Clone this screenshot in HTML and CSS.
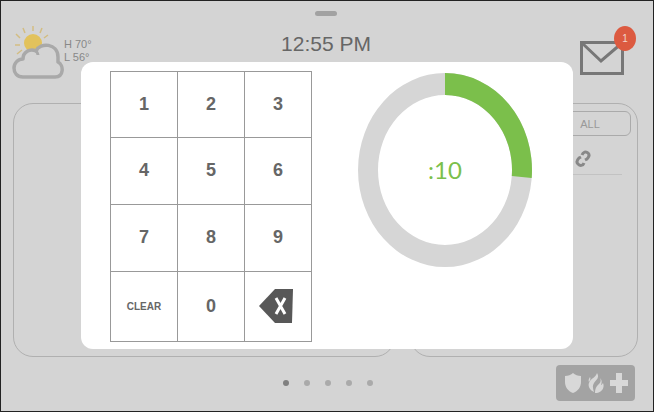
FILE: index.html
```html
<!DOCTYPE html>
<html lang="en">
<head>
  <meta charset="UTF-8">
  <meta name="viewport" content="width=device-width, initial-scale=1.0">
  <title>Security Panel</title>
  <link rel="stylesheet" href="styles.css">
</head>
<body>
  <div class="screen">
    <header class="topbar">
      <div class="weather">
        <svg class="weather-icon" viewBox="0 0 52 54" aria-hidden="true">
          <g stroke="#d3bd82" stroke-width="1.5">
            <path d="M21 6V1M13 8l-2-5M8 13L4 9M8 20H3M28 8l2-5M32 13l4-3M10 25l-5 4"/>
          </g>
          <circle cx="21" cy="18" r="9" fill="#e2c25c"/>
          <path d="M11 52C5 52 2 48 2 43s4-9 9-9c0-7 7-11 13-8 4-9 22-8 22 6v5c6 3 6 15-3 15z" fill="#d4d4d4" stroke="#a9a9a9" stroke-width="3.500" stroke-linejoin="round"/>
          <path d="M24 26c1 1 2 2 2 4" fill="none" stroke="#a9a9a9" stroke-width="3"/>
        </svg>
        <div class="temps">
          <div>H 70°</div>
          <div>L 56°</div>
        </div>
      </div>
      <div class="clock">
        <span class="handle"></span>
        <time>12:55 PM</time>
      </div>
      <div class="mail">
        <button class="mail-button" aria-label="Messages">
          <svg width="44" height="34" viewBox="0 0 44 34" fill="none" stroke="#777" stroke-width="3" aria-hidden="true">
            <path d="M1.500 1.500h41v31h-41z"/>
            <path d="M2 2l19 18L42 2"/>
          </svg>
          <span class="badge">1</span>
        </button>
      </div>
    </header>

    <main class="panels">
      <section class="panel"></section>
      <section class="panel sensors">
        <div class="tabs">
          <button class="tab">ALL</button>
        </div>
        <div class="sensor-row">
          <svg width="16" height="17" viewBox="0 0 16 17" fill="none" stroke="#888" stroke-width="3" aria-hidden="true">
            <path d="M7 5c1-3 4-4 6-2s1 4-1 6l-2 1"/>
            <path d="M9 13c-1 3-4 3-6 1s-1-4 1-6l2-1"/>
          </svg>
        </div>
      </section>
    </main>

    <footer class="bottombar">
      <div class="dots">
        <span class="dot active"></span>
        <span class="dot"></span>
        <span class="dot"></span>
        <span class="dot"></span>
        <span class="dot"></span>
      </div>
      <button class="emergency" aria-label="Emergency">
        <svg width="18" height="22" viewBox="0 0 18 22" fill="#d8d8d8" aria-hidden="true">
          <path d="M9 1c2 2 5 3 8 3v6c0 5-3 9-8 11-5-2-8-6-8-11V4c3 0 6-1 8-3z"/>
        </svg>
        <svg width="16" height="22" viewBox="0 0 16 22" fill="#d8d8d8" aria-hidden="true">
          <path d="M9 1c3 5-1 7-3 10-2 3-1 6 0 9-5-2-7-7-4-11 2-3 6-4 7-8z"/>
          <path d="M12 6c2 4-1 6-3 8-2 3-2 5-2 7 7 0 10-6 8-10-1 1-1 2-2 2 1-3 1-5-1-7z"/>
          <path d="M2 5c1 2 0 3-1 5-1-2 0-3 1-5z"/>
        </svg>
        <svg width="18" height="20" viewBox="0 0 18 20" fill="#d8d8d8" aria-hidden="true">
          <path d="M6 0h6v7h6v6h-6v7H6v-7H0V7h6z"/>
        </svg>
      </button>
    </footer>

    <div class="overlay">
      <div class="dialog" role="dialog" aria-label="Enter code">
        <div class="keypad">
          <button class="key">1</button>
          <button class="key">2</button>
          <button class="key">3</button>
          <button class="key">4</button>
          <button class="key">5</button>
          <button class="key">6</button>
          <button class="key">7</button>
          <button class="key">8</button>
          <button class="key">9</button>
          <button class="key clear">CLEAR</button>
          <button class="key">0</button>
          <button class="key delete" aria-label="Delete">
            <svg width="34" height="34" viewBox="0 0 34 34" aria-hidden="true">
              <path d="M0 17L16 0h18l-1 34H16z" fill="#585858"/>
              <path d="M17 9l9 16M26 9l-9 16" stroke="#fff" stroke-width="3"/>
            </svg>
          </button>
        </div>
        <div class="countdown">
          <svg class="ring" viewBox="0 0 174 194" aria-hidden="true">
            <path fill="#d6d6d6" fill-rule="evenodd" d="M87 0a87 97 0 0 1 0 194a87 97 0 0 1 0-194zM87 22a67 75 0 0 0 0 150a67 75 0 0 0 0-150z"/>
            <path fill="#7bbf4b" d="M87 0A87 97 0 0 1 173.700 105L153.800 103A67 75 0 0 0 87 22z"/>
          </svg>
          <span class="seconds">:10</span>
        </div>
      </div>
    </div>
  </div>
</body>
</html>
```
FILE: styles.css
```css
* {
  box-sizing: border-box;
}
body {
  margin: 0;
  font-family: "Liberation Sans", Arial, sans-serif;
  color: #666;
}
button {
  padding: 0;
  border: none;
  background: none;
  font-family: inherit;
  color: inherit;
  cursor: pointer;
}
svg {
  display: block;
}
.screen {
  position: relative;
  display: flex;
  flex-direction: column;
  min-height: 100vh;
  border: 1px solid #222;
  background-color: #d4d4d4;
}

/* top bar */
.topbar {
  display: grid;
  grid-template-columns: 1fr auto 1fr;
  height: 102px;
  padding: 0 29px 0 11px;
}
.weather {
  display: flex;
  padding-top: 24px;
}
.weather-icon {
  width: 52px;
  height: 54px;
}
.temps {
  padding-top: 13px;
  font-size: 11px;
  line-height: 13px;
  color: #888;
}
.clock {
  display: flex;
  flex-direction: column;
  align-items: center;
  gap: 16px;
  padding: 10px 0 0 16px;
  font-size: 21px;
  line-height: 24px;
}
.handle {
  width: 22px;
  height: 5px;
  border-radius: 3px;
  background-color: #a2a2a2;
}
.mail {
  display: flex;
  justify-content: flex-end;
  align-items: flex-start;
  padding-top: 40px;
}
.mail-button {
  position: relative;
}
.badge {
  position: absolute;
  top: -15px;
  right: -12px;
  width: 22px;
  height: 25px;
  border-radius: 50%;
  background-color: #dc5a40;
  color: #f3d5cc;
  font-size: 10px;
  line-height: 25px;
}

/* panels */
.panels {
  flex: 1;
  display: grid;
  grid-template-columns: 382fr 228fr;
  gap: 15px;
  padding: 0 15px 0 12px;
}
.panel {
  border: 1px solid #b0b0b0;
  border-radius: 20px;
}
.sensors {
  padding: 7px 6px;
}
.tabs {
  display: flex;
  justify-content: flex-end;
  border: 1px solid #aaa;
  border-radius: 6px;
}
.tab {
  width: 80px;
  height: 23px;
  font-size: 11px;
  color: #999;
}
.sensor-row {
  display: flex;
  justify-content: flex-end;
  align-items: center;
  height: 39px;
  margin-right: 9px;
  padding: 7px 31px 0 0;
  border-bottom: 1px solid #c2c2c2;
}

/* bottom bar */
.bottombar {
  display: grid;
  grid-template-columns: 1fr auto 1fr;
  height: 54px;
  padding: 8px 18px 0;
}
.dots {
  grid-column: 2;
  display: flex;
  gap: 15px;
  padding: 15px 0 0 2px;
}
.dot {
  width: 6px;
  height: 6px;
  border-radius: 50%;
  background-color: #aaa;
}
.dot.active {
  background-color: #808080;
}
.emergency {
  justify-self: end;
  display: flex;
  align-items: center;
  justify-content: center;
  gap: 6px;
  width: 79px;
  height: 36px;
  border-radius: 4px;
  background-color: #a3a3a3;
}

/* code entry dialog */
.overlay {
  position: absolute;
  inset: 0;
  display: flex;
  align-items: center;
  justify-content: center;
  padding-bottom: 2px;
}
.dialog {
  display: flex;
  align-items: flex-start;
  gap: 46px;
  padding: 9px 41px 7px 29px;
  border-radius: 12px;
  background-color: #fff;
}
.keypad {
  display: grid;
  grid-template-columns: repeat(3, 67px);
  grid-template-rows: 66px 67px 67px 70px;
  border: solid #999;
  border-width: 1px 0 0 1px;
}
.key {
  display: flex;
  align-items: center;
  justify-content: center;
  border: solid #999;
  border-width: 0 1px 1px 0;
  font-size: 18px;
  font-weight: bold;
}
.clear {
  font-size: 10px;
}
.delete {
  padding-right: 4px;
}
.countdown {
  display: grid;
  place-items: center;
  padding-top: 2px;
}
.ring,
.seconds {
  grid-area: 1 / 1;
}
.ring {
  width: 174px;
  height: 194px;
}
.seconds {
  font-family: Lato, sans-serif;
  font-size: 24px;
  color: #7bbf4b;
}
```
